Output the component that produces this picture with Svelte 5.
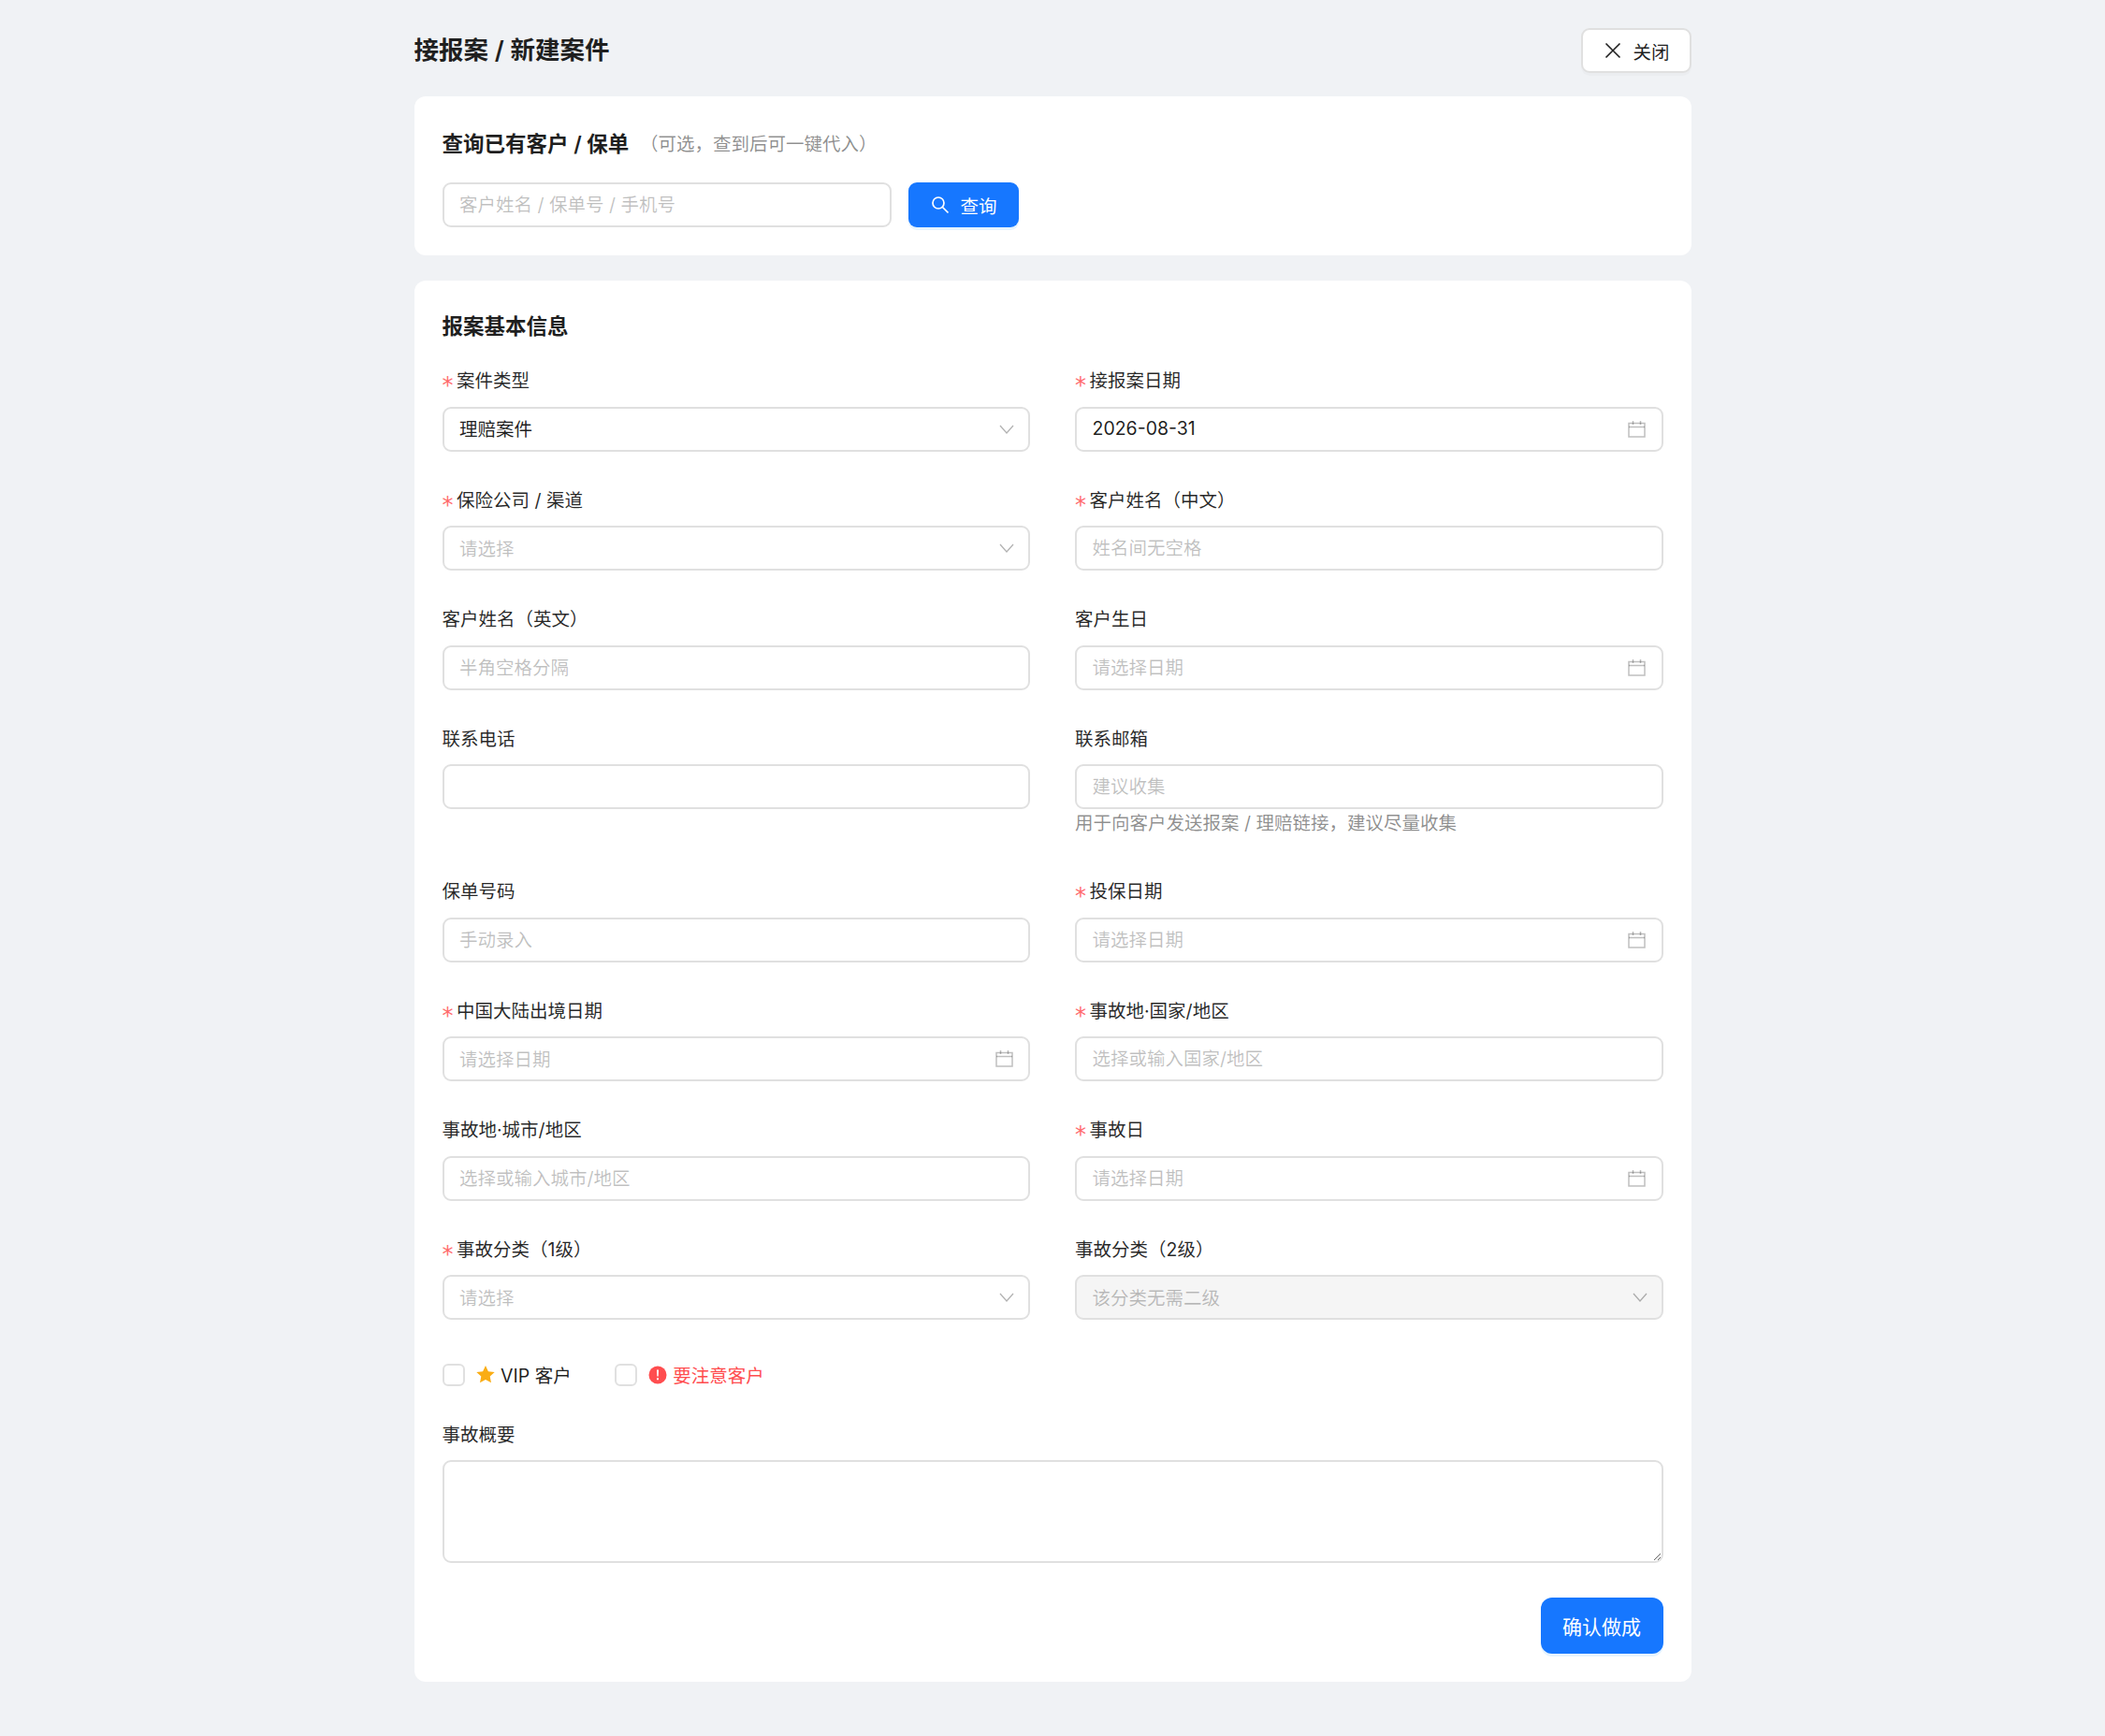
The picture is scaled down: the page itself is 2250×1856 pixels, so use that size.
<script>
	const rows = [
		[
			{ label: '案件类型', required: true, kind: 'select', value: '理赔案件' },
			{ label: '接报案日期', required: true, kind: 'date', value: '2026-08-31' }
		],
		[
			{ label: '保险公司 / 渠道', required: true, kind: 'select', placeholder: '请选择' },
			{ label: '客户姓名（中文）', required: true, kind: 'input', placeholder: '姓名间无空格' }
		],
		[
			{ label: '客户姓名（英文）', kind: 'input', placeholder: '半角空格分隔' },
			{ label: '客户生日', kind: 'date', placeholder: '请选择日期' }
		],
		[
			{ label: '联系电话', kind: 'input', placeholder: '' },
			{
				label: '联系邮箱',
				kind: 'input',
				placeholder: '建议收集',
				hint: '用于向客户发送报案 / 理赔链接，建议尽量收集'
			}
		],
		[
			{ label: '保单号码', kind: 'input', placeholder: '手动录入' },
			{ label: '投保日期', required: true, kind: 'date', placeholder: '请选择日期' }
		],
		[
			{ label: '中国大陆出境日期', required: true, kind: 'date', placeholder: '请选择日期' },
			{ label: '事故地·国家/地区', required: true, kind: 'input', placeholder: '选择或输入国家/地区' }
		],
		[
			{ label: '事故地·城市/地区', kind: 'input', placeholder: '选择或输入城市/地区' },
			{ label: '事故日', required: true, kind: 'date', placeholder: '请选择日期' }
		],
		[
			{ label: '事故分类（1级）', required: true, kind: 'select', placeholder: '请选择' },
			{ label: '事故分类（2级）', kind: 'select', placeholder: '该分类无需二级', disabled: true }
		]
	];
	const fields = rows.flat();
</script>

<div class="page">
	<header class="page-head">
		<h1>接报案 / 新建案件</h1>
		<button class="close-btn">
			<svg width="18" height="18" viewBox="0 0 18 18" fill="none" stroke="currentColor" stroke-width="1.6">
				<path d="M1.5 1.5 16.5 16.5M16.5 1.5 1.5 16.5" />
			</svg>
			<span>关闭</span>
		</button>
	</header>

	<section class="card lookup">
		<div class="card-title">
			<h2>查询已有客户 / 保单</h2>
			<span class="title-note">（可选，查到后可一键代入）</span>
		</div>
		<div class="lookup-row">
			<input class="control lookup-input" placeholder="客户姓名 / 保单号 / 手机号" />
			<button class="primary search-btn">
				<svg width="20" height="20" viewBox="0 0 20 20" fill="none" stroke="currentColor" stroke-width="1.7">
					<circle cx="8" cy="8" r="6" />
					<path d="M12.5 12.5 18.5 18.5" />
				</svg>
				<span>查询</span>
			</button>
		</div>
	</section>

	<section class="card info">
		<h2 class="info-title">报案基本信息</h2>
		<div class="form-grid">
			{#each fields as field}
				<div class="field">
					<div class="label">
						{#if field.required}<span class="star">*</span>{/if}{field.label}
					</div>
					{#if field.kind === 'input'}
						<input class="control" placeholder={field.placeholder} />
					{:else}
						<div class="control box" class:disabled={field.disabled}>
							{#if field.value}
								<span class="val">{field.value}</span>
							{:else}
								<span class="ph">{field.placeholder}</span>
							{/if}
							{#if field.kind === 'select'}
								<svg class="chev" width="16" height="10" viewBox="0 0 16 10" fill="none" stroke="currentColor" stroke-width="1.3">
									<path d="M1 1 8 9 15 1" />
								</svg>
							{:else}
								<svg class="cal" width="19" height="18" viewBox="0 0 19 18" fill="none" stroke="currentColor" stroke-width="1.5">
									<rect x="1" y="2.5" width="17" height="14.5" />
									<path d="M1 6.5H18M5.5 0V4M13.5 0V4" />
								</svg>
							{/if}
						</div>
					{/if}
					{#if field.hint}<div class="hint">{field.hint}</div>{/if}
				</div>
			{/each}
		</div>

		<div class="checks">
			<label class="check">
				<span class="tick"></span>
				<svg class="mark" width="20" height="19" viewBox="0 0 20 19">
					<path fill="#faad14" d="M10 0l2.9 6.2 6.8.8-5 4.6 1.3 6.7L10 15l-6 3.3 1.3-6.7-5-4.6 6.8-.8z" />
				</svg>
				<span>VIP 客户</span>
			</label>
			<label class="check warn">
				<span class="tick"></span>
				<svg class="mark" width="20" height="20" viewBox="0 0 20 20">
					<circle cx="10" cy="10" r="9.5" fill="#ff4d4f" />
					<path fill="#fff" d="M9 4.5h2l-.3 7H9.300zM9 13.200h2v2H9z" />
				</svg>
				<span>要注意客户</span>
			</label>
		</div>

		<div class="label">事故概要</div>
		<textarea class="control summary"></textarea>

		<div class="actions">
			<button class="primary confirm">确认做成</button>
		</div>
	</section>
</div>

<style>
	:global(body) {
		background: #f0f2f5;
		font-family: Inter, 'Noto Sans CJK SC', sans-serif;
		color: rgba(0, 0, 0, 0.88);
	}

	.page {
		width: 1365px;
		margin: 0 auto;
		padding: 30px 0 50px;
	}

	.page-head {
		display: flex;
		align-items: center;
		justify-content: space-between;
		height: 48px;
		margin-bottom: 25px;
	}

	h1 {
		margin: 0 0 5px;
		font-size: 26.5px;
		font-weight: 600;
		color: #1f1f1f;
	}

	h2 {
		margin: 0;
		font-size: 22.5px;
		font-weight: 600;
		color: #1f1f1f;
	}

	.close-btn {
		display: flex;
		align-items: center;
		gap: 13px;
		height: 48px;
		width: 118px;
		padding: 0 0 0 23px;
		background: #fff;
		border: 2px solid #e0e0e0;
		border-radius: 9px;
		box-shadow: 0 3px 0 rgba(0, 0, 0, 0.02);
		font: inherit;
		font-size: 19.5px;
		color: rgba(0, 0, 0, 0.88);
	}

	.card {
		background: #fff;
		border-radius: 12px;
		padding: 30px;
	}

	.lookup {
		margin-bottom: 27px;
	}

	.card-title {
		display: flex;
		align-items: center;
		height: 38px;
		margin-bottom: 24px;
	}

	.title-note {
		margin-left: 11.5px;
		font-size: 19.5px;
		color: rgba(0, 0, 0, 0.45);
	}

	.lookup-row {
		display: flex;
		gap: 18px;
	}

	.control {
		box-sizing: border-box;
		display: block;
		width: 100%;
		height: 48px;
		padding: 0 16.5px;
		border: 2px solid #e0e0e0;
		border-radius: 9px;
		background: #fff;
		font: inherit;
		font-size: 19.5px;
		color: rgba(0, 0, 0, 0.88);
		outline: none;
	}

	.control.lookup-input {
		width: 480px;
	}

	.control::placeholder,
	.ph {
		color: rgba(0, 0, 0, 0.25);
	}

	.box {
		display: flex;
		align-items: center;
		justify-content: space-between;
	}

	.val,
	.ph {
		margin-top: -2px;
	}

	.box.disabled {
		background: #f5f5f5;
	}

	.chev,
	.cal {
		flex: none;
	}

	.chev {
		margin-right: -1.5px;
		color: rgba(0, 0, 0, 0.3);
	}

	.cal {
		color: rgba(0, 0, 0, 0.25);
	}

	.primary {
		border: none;
		background: #1677ff;
		color: #fff;
		font: inherit;
		box-shadow: 0 3px 0 rgba(5, 145, 255, 0.1);
	}

	.search-btn {
		display: flex;
		align-items: center;
		gap: 12px;
		width: 118px;
		height: 48px;
		padding: 0 0 0 24px;
		border-radius: 9px;
		font-size: 19.5px;
	}

	.info-title {
		height: 38px;
		line-height: 38px;
		margin-bottom: 24px;
	}

	.form-grid {
		display: grid;
		grid-template-columns: 1fr 1fr;
		column-gap: 48px;
	}

	.field {
		margin-bottom: 37px;
	}

	.label {
		height: 31.5px;
		line-height: 31.5px;
		margin-bottom: 11px;
		font-size: 19.5px;
		color: rgba(0, 0, 0, 0.85);
	}

	.star {
		display: inline-block;
		width: 15.5px;
		font-family: 'DejaVu Sans', sans-serif;
		font-size: 24px;
		vertical-align: -6px;
		color: #ff6b6d;
	}

	.hint {
		height: 36px;
		line-height: 30px;
		font-size: 19.5px;
		color: rgba(0, 0, 0, 0.45);
	}

	.checks {
		display: flex;
		align-items: center;
		gap: 46px;
		height: 24px;
		margin: 9.5px 0 37px;
	}

	.check {
		display: flex;
		align-items: center;
		font-size: 19.5px;
	}

	.check.warn {
		color: #ff4d4f;
	}

	.tick {
		box-sizing: border-box;
		width: 24px;
		height: 24px;
		border: 2px solid #e0e0e0;
		border-radius: 6px;
		background: #fff;
	}

	.mark {
		margin: 0 6.5px 0 12px;
	}

	.control.summary {
		height: 110px;
		padding: 8px 16.5px;
		resize: vertical;
	}

	.actions {
		display: flex;
		justify-content: flex-end;
		margin-top: 37px;
	}

	.confirm {
		width: 131px;
		height: 60px;
		border-radius: 12px;
		font-size: 21px;
	}
</style>
